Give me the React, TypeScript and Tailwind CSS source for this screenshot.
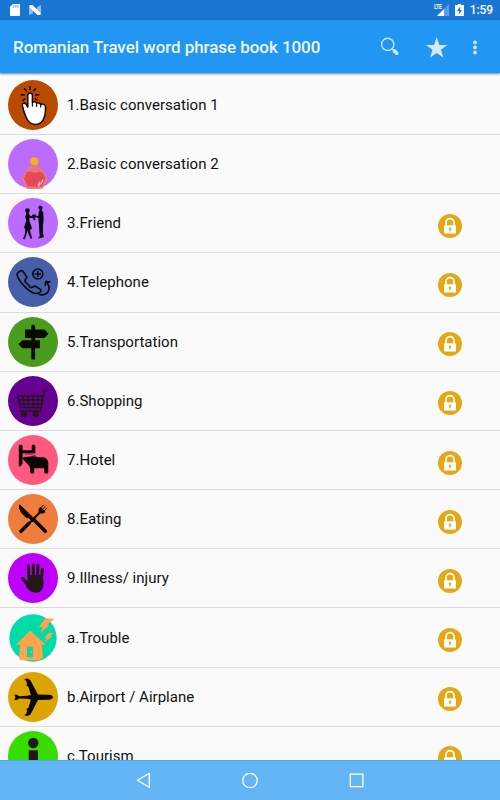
import React from 'react'

type Item = {
    title: string
    color: string
    locked: boolean
    icon: React.ReactNode
}

const TapIcon = () => (
    <g strokeLinecap="round" strokeLinejoin="round">
        <path d="M22 6.800v2.700M16.600 8.600l1.500 2.200M27.400 8.600l-1.500 2.200M13.300 14.700l2.900.2M30.700 14.700l-2.900.2M15 20.300l2-1.400M29 20l-1.500-1.200" stroke="#1a0d05" strokeWidth="1.600" fill="none" />
        <path d="M19.800 15.200c0-3.100 4.600-3.100 4.600 0v7.300c1.500-1.200 3.500-.8 4.100.8 1.600-1 3.500-.4 4.100 1.200 2-1 4.800 0 4.900 2.300.1 3.500 0 7.400-1.300 10.700-1.500 4-4 7-8.200 7-4.500 0-6.800-1.600-8.700-5-1.600-3-2.500-5-3.300-7.800l-1.600-6c-.6-2.400 2.200-3.500 3.500-1.500l1.900 3z" fill="#fff" stroke="#140a05" strokeWidth="1.500" />
        <path d="M24.400 22.500v3.500M28.600 23.500v3M32.700 24.500v2.500" stroke="#140a05" strokeWidth="1.200" />
    </g>
)

const PerfumeIcon = () => (
    <g>
        <circle cx="26.300" cy="22.300" r="4.100" fill="#fbae17" />
        <path d="M20.500 27h11.800l2.200 5H18.300z" fill="#e9767f" />
        <path d="M18.200 31h16.600L40 39.500 34.500 49.500c-6 .8-10 .8-16 0L13.200 39.500z" fill="#e9767f" />
        <path d="M18.800 33.200c4-2 6 1 10 .2 2-.6 4-1 5.500 0l3.200 6.200-4 7.800H19.700l-3.700-7.800z" fill="#e84857" />
        <path d="M34.800 41c-.7 2.500-2 4.200-4.300 5.700M31.800 43l-1.600 2.500" stroke="#fff" strokeWidth="1" fill="none" strokeLinecap="round" />
    </g>
)

const CoupleIcon = () => (
    <g fill="#0a0410">
        <path d="M17.200 12.500c0-3 4.400-3.200 4.500-.2.100 1.400-.7 2-1.200 2.600l1.400 2.700 3.200 1.500-.3 1-3.300-.4-.1 3 2.800 8.200-2.300.6.800 4 1.500 4.800-1.500.4-2.600-5.500-.7-3.200-1 4.800-1.600 4 .9.300-1.700.2-1-.6 1.900-4.700.4-5.500-1.400-.4 2.400-7.300-1-4 1-3.300z" />
        <path d="M30.300 9.700c.2-2.700 4.100-2.500 4.200.1 0 1.200-.6 2-1 2.500l1.800 2 .3 8-.6 5.200v7.500l.8 4-1 .6-4.400.9-.2-.8 1.500-1.200-.9-13.500-.4-5-4-1.300.3-1.200 3.700.5.400-4.500 1-1.200z" />
        <circle cx="26" cy="18.300" r="2.100" />
        <path d="M25.200 19l2.500 3-1.500.5-2-3z" />
    </g>
)

const PhoneIcon = () => (
    <g fill="none" stroke="#080a12" strokeWidth="1.600" strokeLinejoin="round" strokeLinecap="round">
        <path d="M10 15.700l2.300-1.700c1.200-.8 2.300-.2 3.100 1l2.800 4c.9 1.300.6 2.300-.5 3.200-1.300 1-1.100 1.600-.1 3l4.300 4.600c1.100 1 1.700 1.100 2.700.3 1.100-.9 2.300-1.300 3.600-.5l3.800 2.500c1.100.9 1.200 2.200.2 3l-1.700 1c-3.300 1.500-6.800-.5-10.200-3.200-4.400-3.700-8.600-8.600-10.700-13.300-.7-1.700-.8-2.800.4-3.900z" />
        <circle cx="29.800" cy="17" r="5" />
        <path d="M29.800 14.500v5M27.300 17h5M31.500 37.500c4.200 1.200 8.700-1 9.500-5.200.4-2.500-.3-4.500-2-6.700M37.200 28.300l.7-3.800 3.800.4" />
    </g>
)

const SignpostIcon = () => (
    <g fill="#050a02">
        <path d="M23.300 9.500c0-2.400 3.800-2.400 3.800 0v33h-3.800z" />
        <path d="M17 12.500h19.500l4 4.200-4 4.200H17z" />
        <path d="M32 23.300H14.500l-4.200 4 4.200 4H32z" />
    </g>
)

const CartIcon = () => (
    <g fill="none" stroke="#231815" strokeLinejoin="round">
        <path d="M40.300 13.700h-3.800L32.700 35H11.500" strokeWidth="1.400" />
        <path d="M9.700 20h25l-1.600 11.700H12.500zM15 20l1.500 11.700M20 20l.7 11.700M25 20v11.700M30 20l-1 11.700M10.600 24h23.500M11.600 28h22" strokeWidth="1.300" />
        <circle cx="16" cy="38" r="3" fill="#231815" stroke="none" />
        <circle cx="27.800" cy="38" r="3" fill="#231815" stroke="none" />
    </g>
)

const BedIcon = () => (
    <g fill="#0c0205">
        <path d="M10.800 11c0-1.800 3.800-1.800 3.800 0v4.200H23.700V11c0-1.800 3.600-1.800 3.600 0v7.500l-2.300-.3H14.600v10.300l-1.800 2.800h-2z" />
        <path d="M14.900 22.500c1.500-.8 3-.9 4.500-.8 2.600.2 4.600-1 7.300-.2l3 .8h5.800c3 .4 4.800 2.600 4.800 6v9c0 1.800-4 1.800-4 0V33.200H26.200v4.100c0 1.800-4 1.800-4 0v-4.200c-.8-4-4.800-4.800-7.300-9.400z" />
        <path d="M17 19.200c4-1 9 .5 11.500 2.500" stroke="#0c0205" strokeWidth=".6" fill="none" />
    </g>
)

const CutleryIcon = () => (
    <g fill="none" stroke="#0b0502" strokeLinecap="round">
        <path d="M26.500 26.200l10.800 11" strokeWidth="3.500" />
        <path d="M11.700 11.300c-.7 3.800 1.600 7.500 4.300 10l2.300 2.300 2-.2 4.700 4.400 1.800-2z" fill="#0b0502" strokeWidth="1" strokeLinejoin="round" />
        <path d="M13 37.300l8-8" strokeWidth="3.500" />
        <path d="M20 30.500l12.500-12.800" strokeWidth="2" />
        <path d="M31.200 15c-1 2.300.2 4.200 3.600 4.200l2.300-1.300-4.400-4.400z" fill="#0b0502" strokeWidth="1" />
        <path d="M31.700 14.800l3.700-3.700M33.400 16.200l3.900-3.800M35.200 17.800l3.600-3.700" strokeWidth=".9" />
    </g>
)

const HandIcon = () => (
    <g fill="none" stroke="#231815" strokeLinecap="round" strokeLinejoin="round">
        <path d="M21 24l-.6-11.200M25.300 23V12M29.500 23l.5-10.600M33.300 25l1.200-8.700" strokeWidth="3.100" />
        <path d="M14.600 25.500l5.600 6.200" strokeWidth="3.500" />
        <path d="M20.500 23h13.300l.9 6.500c0 5.300-2 9.300-7 9.300-4 0-6.500-2-8.700-5.500l1.500-4z" fill="#231815" strokeWidth="2" />
    </g>
)

const HouseIcon = () => (
    <g fill="#ffa34e">
        <path d="M22.200 17.500l15.600 14.200h-4l1 11c0 2.600-1.500 4.600-3.800 4.600H14.500c-2.200 0-4-2-3.500-4.400l1.200-11.200H7.700z" />
        <path d="M19 33.700h6v10.600h-6z" fill="#00dba8" />
        <circle cx="23.400" cy="39.200" r="1" />
        <path d="M37 5.300L46.300 6l-7.300 5.400 2 .8-8.800 8 2.500-6.300-4 .6z" />
        <path d="M40.700 19.700l5 .3-3.400 3 1.800.4-7.600 6.300 2.300-4.600-2.700.2z" />
    </g>
)

const PlaneIcon = () => (
    <g fill="#0a0700">
        <path d="M6.300 22.700h2.500l2.500 1.500 8-.4 3.600-.7-2.600-8.500-1.600-.7-.5-1.200 1.200-.4-1.400-3.700-1.200-.4-.2-1.200 3.400-.4 2.500 1.800 7.500 14.200 10.500.2c2.700.2 4.500 1 4.500 2.500s-1.800 2.400-4.500 2.500l-10.500.3-7.400 14.200-2.600 1.600-3.400-.3.200-1.200 1.300-.4 1.300-3.600-1.200-.5.500-1.200 1.600-.6 2.600-8.500-3.600-.8-8-.4-2.500 1.500H6.300l1.200-2.600z" />
    </g>
)

const InfoIcon = () => (
    <g fill="#231815">
        <circle cx="25.300" cy="12" r="5.200" />
        <path d="M20.700 19.300H30V42h-9.300z" />
    </g>
)

const items: Item[] = [
    { title: '1.Basic conversation 1', color: '#ba4a00', locked: false, icon: <TapIcon /> },
    { title: '2.Basic conversation 2', color: '#bb6bff', locked: false, icon: <PerfumeIcon /> },
    { title: '3.Friend', color: '#bb6bff', locked: true, icon: <CoupleIcon /> },
    { title: '4.Telephone', color: '#465fa8', locked: true, icon: <PhoneIcon /> },
    { title: '5.Transportation', color: '#4a9d1c', locked: true, icon: <SignpostIcon /> },
    { title: '6.Shopping', color: '#650090', locked: true, icon: <CartIcon /> },
    { title: '7.Hotel', color: '#ff5980', locked: true, icon: <BedIcon /> },
    { title: '8.Eating', color: '#ef7b3c', locked: true, icon: <CutleryIcon /> },
    { title: '9.Illness/ injury', color: '#be00ff', locked: true, icon: <HandIcon /> },
    { title: 'a.Trouble', color: '#00dba8', locked: true, icon: <HouseIcon /> },
    { title: 'b.Airport / Airplane', color: '#dba400', locked: true, icon: <PlaneIcon /> },
    { title: 'c.Tourism', color: '#37dc00', locked: true, icon: <InfoIcon /> },
]

const Lock = () => (
    <svg className="mt-[5px] h-6 w-6" viewBox="0 0 24 24">
        <circle cx="12" cy="12" r="12" fill="#e4a816" />
        <path d="M8 11.500V8.700a4 4 0 0 1 8 0v2.800" fill="none" stroke="#fff" strokeWidth="1.700" />
        <path d="M6 11.300h12v8.200H6z" fill="#fff" />
        <path d="M12 13.500a1.300 1.300 0 0 1 .7 2.300v1.500h-1.400v-1.500a1.300 1.300 0 0 1 .7-2.300z" fill="#e4a816" />
    </svg>
)

const StatusBar = () => (
    <div className="flex h-5 shrink-0 items-center bg-[#1976d2] pl-2.5 pr-[7px]">
        <svg className="h-5 w-8" viewBox="0 0 32 20">
            <path d="M3 4h6c.6 0 1 .4 1 1v10c0 .6-.4 1-1 1H1c-.6 0-1-.4-1-1V7z" fill="#fff" />
            <path d="M3.900 5.500v2M5.900 5.500v2M7.900 5.500v2" stroke="#1976d2" strokeWidth=".9" />
            <path d="M19 7l4 3.500v3L19 15zM31 5v9l-4-3.500V7z" fill="#8fbdeb" />
            <path d="M19.500 5h3L31 13.500 30 15h-2.500L19 7z" fill="#fff" />
        </svg>
        <div className="ml-auto flex items-center">
            <div className="relative h-5 w-[15px]">
                <svg className="h-5 w-[15px]" viewBox="0 0 15 20">
                    <path d="M15 4v12H3z" fill="#5e9fe0" />
                    <path d="M10 9v7H3z" fill="#fff" />
                </svg>
                <span className="absolute left-0 top-[3px] origin-left scale-x-[0.65] text-[8px] font-bold leading-[8px] tracking-[-0.4px] text-white">LTE</span>
            </div>
            <svg className="ml-1.5 h-5 w-[9px]" viewBox="0 0 9 20">
                <path d="M3 4h3v1h2.300c.4 0 .7.3.7.700v9.600c0 .4-.3.700-.7.700H.7c-.4 0-.7-.3-.7-.7V5.700c0-.4.300-.700.700-.700H3z" fill="#fff" />
                <path d="M5.200 6.500v3.600H7L3.900 14.500v-3.600H2z" fill="#1976d2" />
            </svg>
            <span className="ml-1.5 text-[12px] font-medium leading-5 tracking-[-0.1px] text-white">1:59</span>
        </div>
    </div>
)

const Header = () => (
    <div className="z-10 flex h-[53px] shrink-0 items-center bg-[#2196f3] pl-[13px] shadow-[0_1px_2px_rgba(0,0,0,0.5)]">
        <h1 className="w-[366px] whitespace-nowrap text-[17px] font-medium leading-6 tracking-[-0.06px] text-[#eef7ff]">
            Romanian Travel word phrase book 1000
        </h1>
        <svg className="mt-[3px] h-6 w-6" viewBox="0 0 24 24">
            <circle cx="8.700" cy="8.400" r="6.100" fill="none" stroke="#c8e5fc" strokeWidth="1.400" />
            <path d="M13 12.700l2.500 2.500" stroke="#c8e5fc" strokeWidth="1.300" />
            <path d="M15.300 14.900l2.500 2.300" stroke="#d3eafd" strokeWidth="3.500" strokeLinecap="round" />
        </svg>
        <svg className="ml-[22px] mt-[2px] h-6 w-6" viewBox="0 0 24 24">
            <path d="M11.700 1l2.600 7.900h8.200l-6.600 4.900 2.500 7.900-6.700-4.800-6.700 4.800 2.500-7.900L.9 8.900h8.200z" fill="#d3eafd" />
        </svg>
        <svg className="ml-6 mt-[2px] h-6 w-4" viewBox="0 0 16 24">
            <circle cx="2" cy="6.400" r="1.900" fill="#c8e5fc" />
            <circle cx="2" cy="11.400" r="1.900" fill="#c8e5fc" />
            <circle cx="2" cy="16.500" r="1.900" fill="#c8e5fc" />
        </svg>
    </div>
)

const NavBar = () => (
    <div className="flex h-10 shrink-0 items-center border-t border-[#41a8f8] bg-[#64b5f6] pl-[136px]">
        <svg className="h-4 w-4" viewBox="0 0 16 16" fill="none" stroke="#fff" strokeWidth="1.300" strokeLinejoin="round">
            <path d="M13.300.3v14L1.500 7.300z" />
        </svg>
        <svg className="ml-[90px] h-4 w-4" viewBox="0 0 16 16" fill="none" stroke="#fff" strokeWidth="1.300">
            <circle cx="8" cy="7.500" r="7.200" />
        </svg>
        <svg className="ml-[91px] h-4 w-4" viewBox="0 0 16 16" fill="none" stroke="#fff" strokeWidth="1.300">
            <path d="M1.300 1.100h12.600v12.600H1.300z" />
        </svg>
    </div>
)

const App = () => {
    return (
        <div className="flex h-[800px] w-[500px] flex-col overflow-hidden bg-[#fafafa] font-[Roboto,sans-serif]">
            <StatusBar />
            <Header />
            <ul className="min-h-0 flex-1 overflow-hidden pt-[2.8px]">
                {items.map((item) => (
                    <li key={item.title} className="flex h-[59.2px] items-center border-b border-[#dcdcdc] pl-2 pr-[38px]">
                        <svg className="h-[50px] w-[50px] shrink-0" viewBox="0 0 50 50">
                            <circle cx="25" cy="25" r={item.title === 'a.Trouble' ? 23.7 : 25} fill={item.color} />
                            {item.icon}
                        </svg>
                        <span className="ml-[9px] flex-1 text-[15px] leading-5 tracking-[0.02px] text-[#111]">{item.title}</span>
                        {item.locked && <Lock />}
                    </li>
                ))}
            </ul>
            <NavBar />
        </div>
    )
}

export default App
